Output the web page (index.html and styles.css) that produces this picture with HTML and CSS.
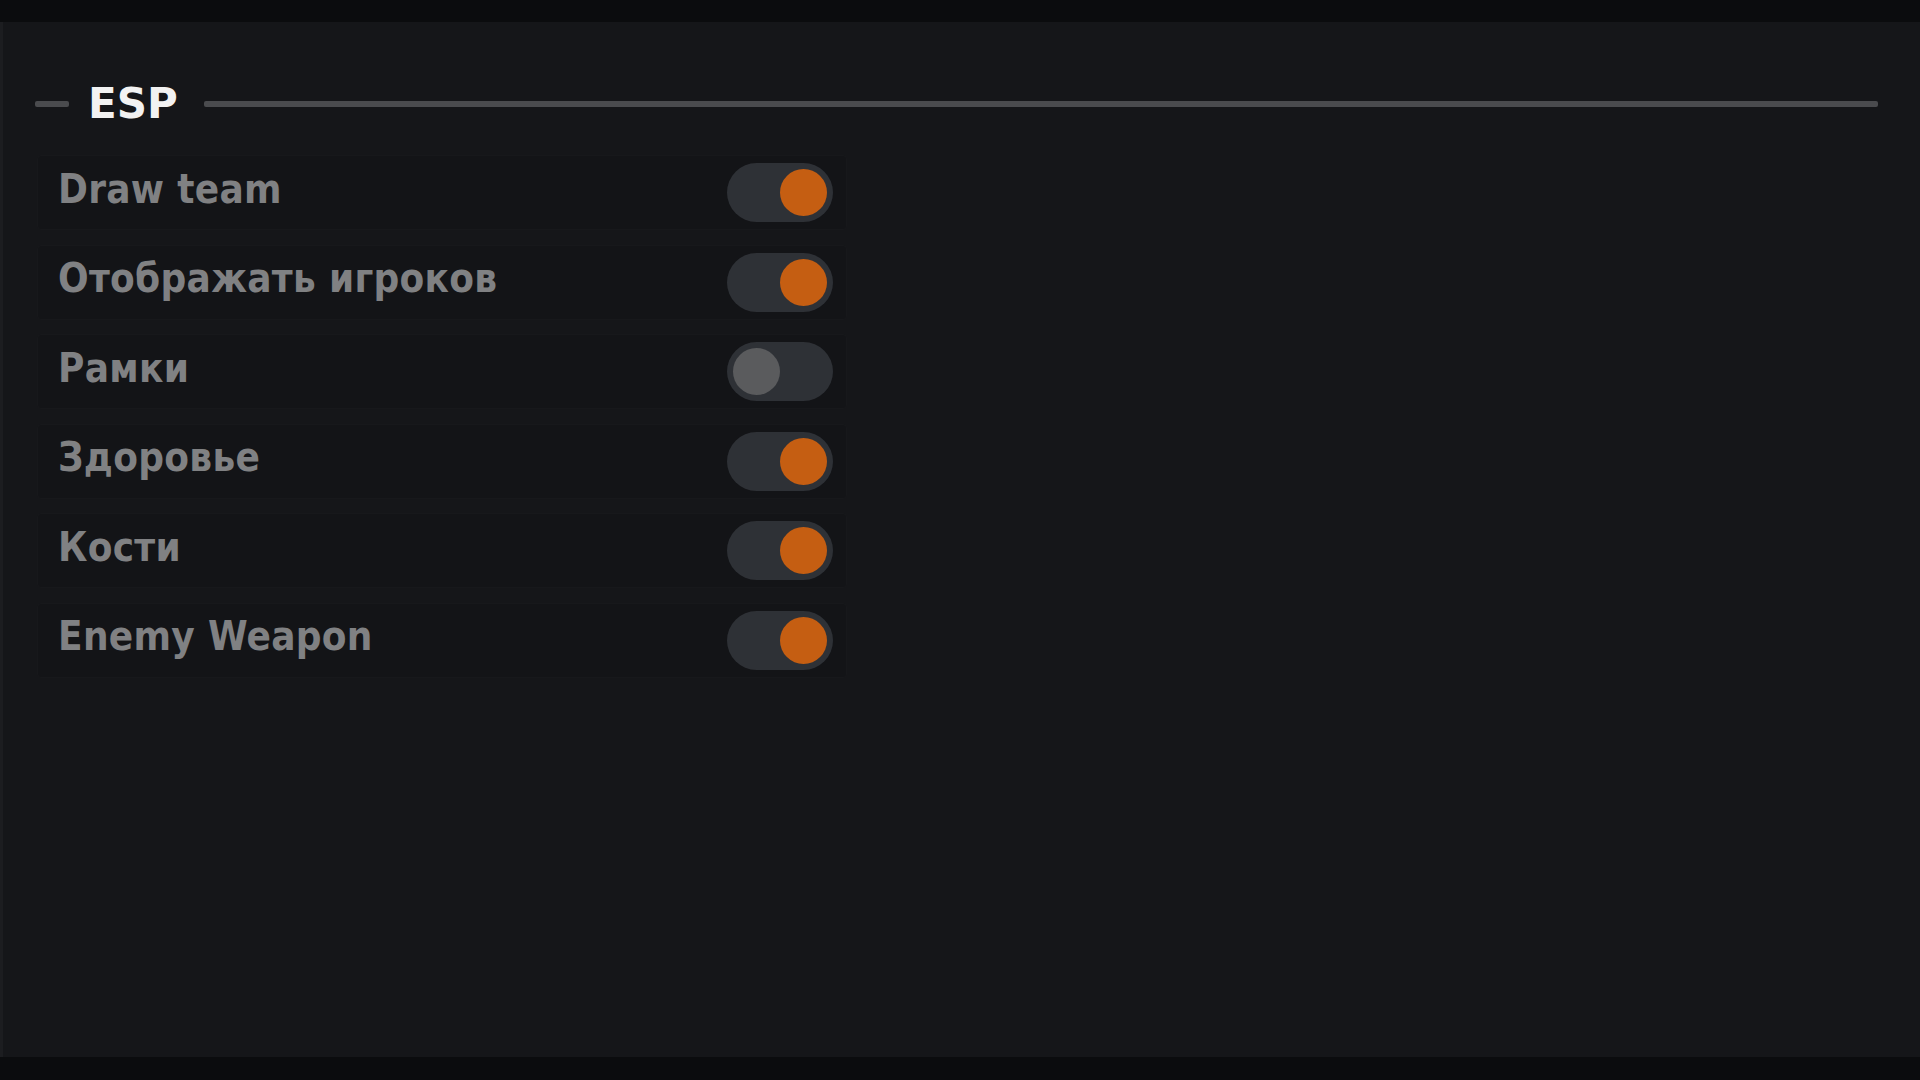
FILE: index.html
```html
<!DOCTYPE html>
<html lang="ru">
<head>
<meta charset="utf-8">
<title>ESP</title>
<link rel="stylesheet" href="styles.css">
</head>
<body>
<div class="topbar"></div>
<main class="panel">
  <div class="section-head">
    <span class="dash"></span>
    <h1 class="title">ESP</h1>
    <span class="rule"></span>
  </div>
  <div class="options">
    <div class="row"><span class="label">Draw team</span><span class="toggle on"><span class="knob"></span></span></div>
    <div class="row"><span class="label">Отображать игроков</span><span class="toggle on"><span class="knob"></span></span></div>
    <div class="row"><span class="label">Рамки</span><span class="toggle"><span class="knob"></span></span></div>
    <div class="row"><span class="label">Здоровье</span><span class="toggle on"><span class="knob"></span></span></div>
    <div class="row"><span class="label">Кости</span><span class="toggle on"><span class="knob"></span></span></div>
    <div class="row"><span class="label">Enemy Weapon</span><span class="toggle on"><span class="knob"></span></span></div>
  </div>
</main>
<div class="bottombar"></div>
</body>
</html>
```
FILE: styles.css
```css
html, body {
  margin: 0;
  padding: 0;
}
body {
  background: #0b0c0e;
  width: 1920px;
  height: 1080px;
  overflow: hidden;
  font-family: "DejaVu Sans Condensed", "DejaVu Sans", sans-serif;
  display: flex;
  flex-direction: column;
}
.topbar {
  height: 22px;
  background: #0b0c0e;
  flex: none;
}
.bottombar {
  height: 23px;
  background: #0b0c0e;
  flex: none;
}
.panel {
  flex: 1;
  background: #151619;
  border-left: 3px solid #1c1d20;
  padding: 60px 42px 0 30px;
  box-sizing: border-box;
}
.section-head {
  display: flex;
  align-items: center;
  height: 44px;
}
.dash {
  width: 34px;
  height: 6px;
  background: #4a4b4e;
  border-radius: 2px;
  flex: none;
  margin-left: 2px;
}
.title {
  margin: 0 26px 0 19px;
  font-family: "DejaVu Sans", sans-serif;
  font-weight: bold;
  font-size: 42px;
  line-height: 44px;
  color: #f2f2f2;
}
.rule {
  flex: 1;
  height: 6px;
  background: #4a4b4e;
  border-radius: 2px;
}
.options {
  margin: 29px 0 0 4px;
  width: 810px;
  display: flex;
  flex-direction: column;
  gap: 14.5px;
}
.row {
  height: 75px;
  box-sizing: border-box;
  display: flex;
  align-items: center;
  justify-content: space-between;
  padding: 0 13px 0 20px;
  background: #131417;
  border: 1px solid #17181b;
  border-radius: 4px;
}
.label {
  font-weight: bold;
  font-size: 40px;
  letter-spacing: 0.3px;
  color: #808183;
  white-space: nowrap;
  margin-bottom: 8px;
}
.toggle {
  width: 106px;
  height: 59px;
  border-radius: 30px;
  background: #2e3136;
  display: flex;
  align-items: center;
  padding: 0 6px;
  box-sizing: border-box;
  justify-content: flex-start;
}
.toggle.on {
  justify-content: flex-end;
}
.knob {
  width: 47px;
  height: 47px;
  border-radius: 50%;
  background: #5a5b5d;
}
.toggle.on .knob {
  background: #c55e12;
}
```
